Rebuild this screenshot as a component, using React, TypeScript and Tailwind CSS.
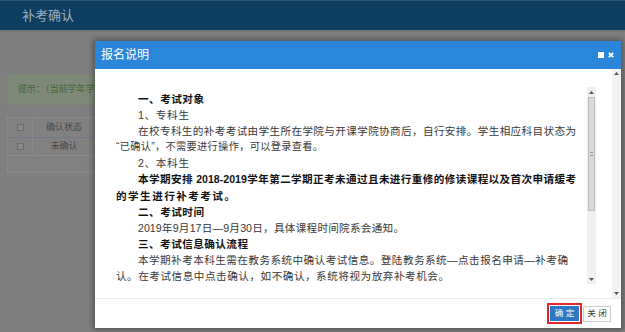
import React from "react";

const FONT = { fontFamily: '"Liberation Sans", "Noto Sans CJK SC", sans-serif' };

function Line({
  children,
  w,
  indent = true,
  bold = false,
  small = false,
}: {
  children: React.ReactNode;
  w: string;
  indent?: boolean;
  bold?: boolean;
  small?: boolean;
}) {
  return (
    <div
      className={`${w} ${indent ? "pl-[22px]" : ""} ${bold ? "font-bold text-[#111]" : "text-[#383838]"} ${
        small ? "text-[10.2px]" : ""
      } [text-align-last:justify] text-justify overflow-visible`}
    >
      {children}
    </div>
  );
}

function Arrow({ dir }: { dir: "up" | "down" }) {
  return (
    <svg width="5" height="3" viewBox="0 0 5 3">
      {dir === "up" ? <path d="M0 3 L2.5 0 L5 3 Z" fill="#555" /> : <path d="M0 0 L2.5 3 L5 0 Z" fill="#555" />}
    </svg>
  );
}

export default function App() {
  return (
    <div className="relative w-[625px] h-[332px] overflow-hidden bg-[#7f7f7f]" style={FONT}>
      {/* background page */}
      <div className="h-[30px] bg-[#0d3d5f] border-t border-[#2a5878] flex items-center pl-[22px]">
        <span className="text-[13px] text-[#9fb0c0]">补考确认</span>
      </div>
      <div className="h-[2px] bg-[#747474]" />
      <div className="pl-[7px] pt-[42px]">
        <div className="h-[31px] w-[300px] bg-[#7e8977] border border-[#7a8673] flex items-center pl-[10px]">
          <span className="text-[9px] text-[#44612f] whitespace-nowrap">提示：（当前学年学期补考确认）</span>
        </div>
        <div className="mt-[12px] w-[300px] bg-[#818181] border border-[#8a8a8a] text-[9px] text-[#474747]">
          <div className="flex h-[20px] border-b border-[#6e7a86]">
            <div className="w-[25px] flex items-center justify-center border-r border-[#8b8b8b]">
              <span className="w-[7px] h-[7px] border border-[#6a6a6a] bg-[#8a8a8a]" />
            </div>
            <div className="w-[63px] flex items-center justify-center border-r border-[#8b8b8b]">确认状态</div>
          </div>
          <div className="flex h-[18px] border-b border-[#8b8b8b]">
            <div className="w-[25px] flex items-center justify-center border-r border-[#8b8b8b]">
              <span className="w-[7px] h-[7px] border border-[#6a6a6a] bg-[#8a8a8a]" />
            </div>
            <div className="w-[63px] flex items-center justify-center border-r border-[#8b8b8b]">未确认</div>
          </div>
          <div className="h-[16px]" />
        </div>
      </div>

      {/* dialog */}
      <div className="absolute left-[95px] top-[41px] w-[526px] h-[287px] bg-white shadow-[0_0_6px_2px_rgba(0,0,0,0.35)] flex flex-col">
        <div className="h-[28px] bg-[#2a86d9] flex items-center justify-between pl-[6px] pr-[7px]">
          <span className="text-[12px] text-white">报名说明</span>
          <div className="flex items-center gap-[4px]">
            <span className="w-[6px] h-[6px] bg-white" />
            <svg width="6" height="6" viewBox="0 0 6 6">
              <path d="M0.8 0.8 L5.2 5.2 M5.2 0.8 L0.8 5.2" stroke="white" strokeWidth="1.8" />
            </svg>
          </div>
        </div>
        <div className="h-[229px] flex">
          <div className="flex-1 pl-[21px] pt-[18px]">
            <div className="w-[480px] h-[197px] flex">
              <div className="flex-1 pt-[4px] text-[10.6px] leading-[16.1px]">
                <Line w="w-[88px]" bold>一、考试对象</Line>
                <Line w="w-[73px]">1、专科生</Line>
                <Line w="w-[460px]">在校专科生的补考考试由学生所在学院与开课学院协商后，自行安排。学生相应科目状态为</Line>
                <Line w="w-[207px]" indent={false} small>“已确认”，不需要进行操作，可以登录查看。</Line>
                <Line w="w-[73px]">2、本科生</Line>
                <Line w="w-[460px]" bold>本学期安排 2018-2019学年第二学期正考未通过且未进行重修的修读课程以及首次申请缓考</Line>
                <Line w="w-[119px]" bold indent={false}>的学生进行补考考试。</Line>
                <Line w="w-[88px]" bold>二、考试时间</Line>
                <Line w="w-[288px]">2019年9月17日—9月30日，具体课程时间院系会通知。</Line>
                <Line w="w-[132px]" bold>三、考试信息确认流程</Line>
                <Line w="w-[452px]">本学期补考本科生需在教务系统中确认考试信息。登陆教务系统—点击报名申请—补考确</Line>
                <Line w="w-[333px]" indent={false}>认。在考试信息中点击确认，如不确认，系统将视为放弃补考机会。</Line>
              </div>
              <div className="w-[9px] bg-[#f0f0f0] flex flex-col">
                <div className="h-[10px] flex items-center justify-center">
                  <Arrow dir="up" />
                </div>
                <div className="mx-[1px] h-[114px] bg-[#dadada] border border-[#bdbdbd] flex items-center justify-center">
                  <span className="w-[3px] h-[4px] border-y border-[#999]" />
                </div>
                <div className="flex-1" />
                <div className="h-[10px] flex items-center justify-center">
                  <Arrow dir="down" />
                </div>
              </div>
            </div>
          </div>
          <div className="w-[9px] bg-[#f3f3f3] flex flex-col justify-between py-[3px]">
            <div className="flex justify-center">
              <Arrow dir="up" />
            </div>
            <div className="flex justify-center">
              <Arrow dir="down" />
            </div>
          </div>
        </div>
        <div className="flex-1 border-t border-[#ececec] flex items-center justify-end pr-[10px] gap-[1px]">
          <div className="border-2 border-[#e0262c] p-px">
            <div className="w-[29px] h-[15px] bg-[#2c78c2] flex items-center justify-center text-[8.5px] text-white">确 定</div>
          </div>
          <div className="w-[28px] h-[16px] bg-white border border-[#cccccc] flex items-center justify-center text-[8.5px] text-[#333]">
            关 闭
          </div>
        </div>
      </div>
    </div>
  );
}
